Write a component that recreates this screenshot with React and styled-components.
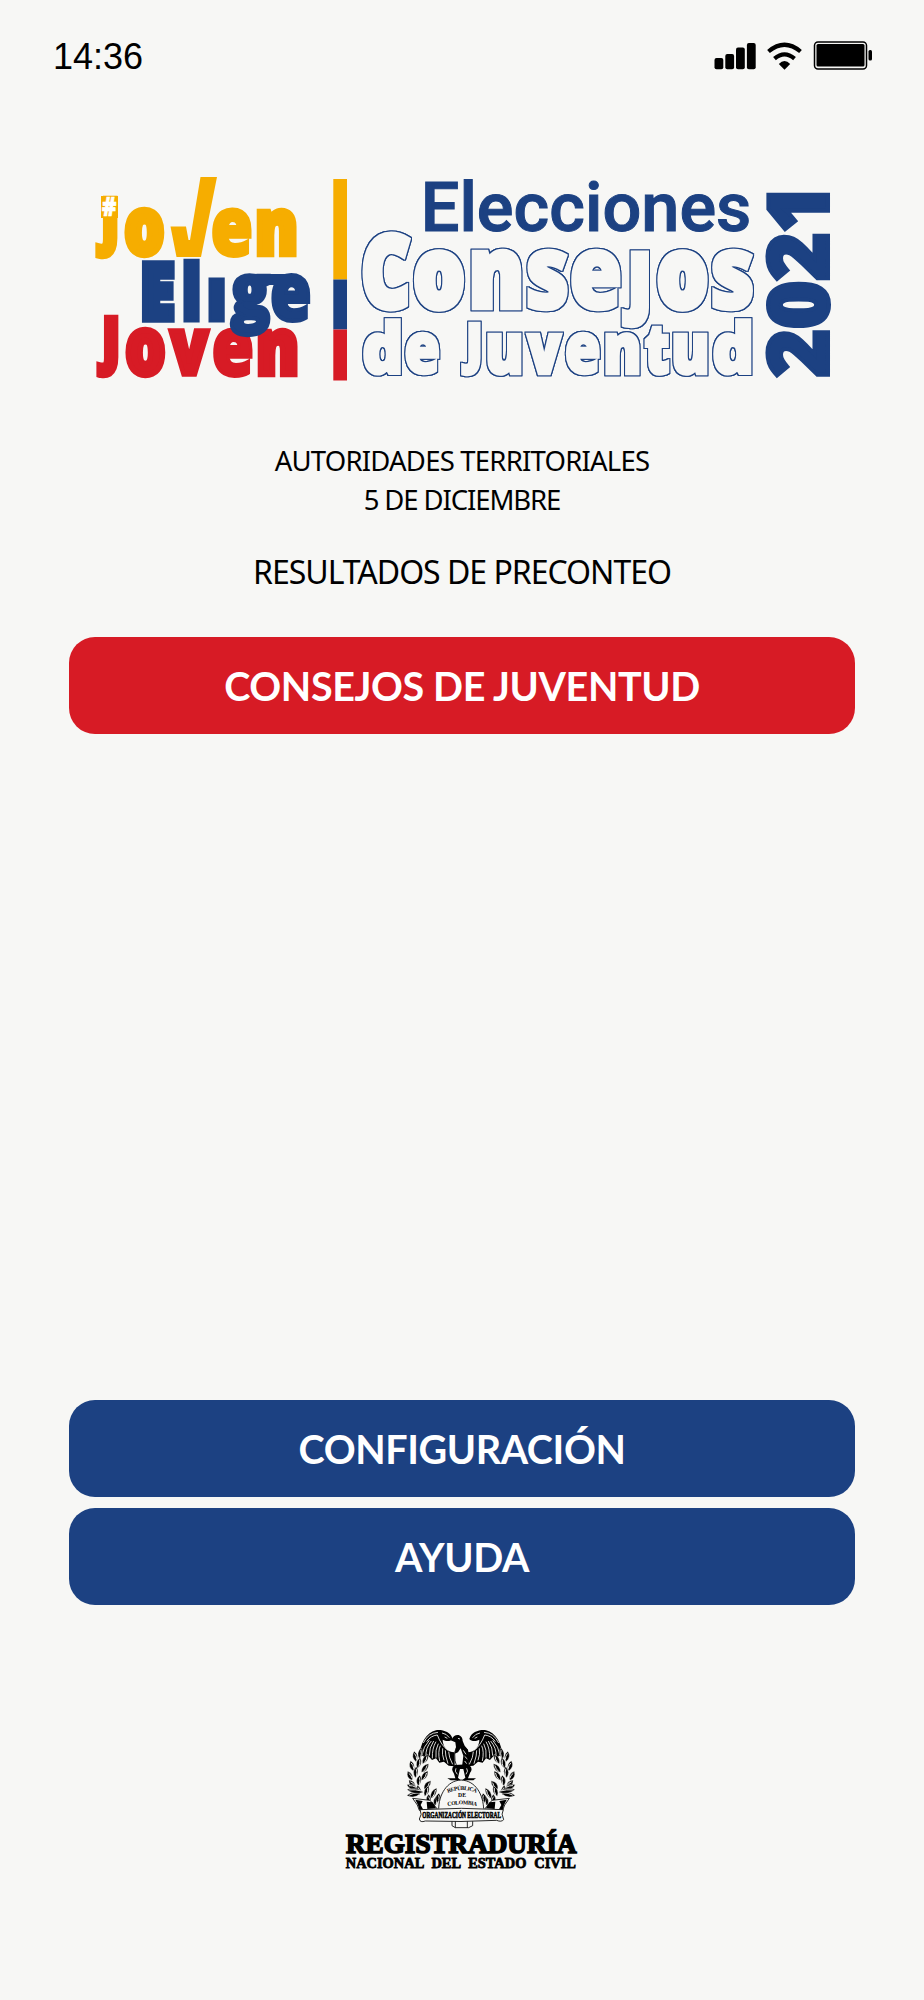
import React from 'react';
import styled, { createGlobalStyle } from 'styled-components';

const yellow = '#f6ad00';
const blue = '#1c4182';
const red = '#d71b25';
const paper = '#f7f7f5';

const canvas = document.createElement('canvas').getContext('2d');

// stretches a piece of text so that its ink fills the given box
function FitText({ children, box, color, font = 'Open Sans', weight = 800, bold = 0, gap = 0, turn }) {
  canvas.font = `${weight} 100px "${font}"`;
  canvas.wordSpacing = `${gap}px`;
  const m = canvas.measureText(children);
  const [x, y, x2, y2] = box;
  const w = (turn ? y2 - y : x2 - x) - bold;
  const h = (turn ? x2 - x : y2 - y) - bold;
  const sx = w / (m.actualBoundingBoxLeft + m.actualBoundingBoxRight);
  const sy = h / (m.actualBoundingBoxAscent + m.actualBoundingBoxDescent);
  const dx = bold / 2 + m.actualBoundingBoxLeft * sx;
  const dy = bold / 2 + m.actualBoundingBoxAscent * sy;
  const place = turn
    ? `translate(${x} ${y2}) rotate(-90) translate(${dx} ${dy})`
    : `translate(${x + dx} ${y + dy})`;
  return (
    <Letter
      $font={font}
      $weight={weight}
      $color={color}
      $bold={bold}
      $gap={gap}
      transform={`${place} scale(${sx} ${sy})`}
    >
      {children}
    </Letter>
  );
}

// letter, ink box, extra weight
const joven = [
  ['J', [95, 196, 118, 258], 6],
  ['o', [124, 208, 165, 258], 6],
  ['e', [212, 208, 252, 258], 3.6],
  ['n', [256, 208, 297, 257], 6],
];

const elige = [
  ['E', [141, 261, 175.5, 322.5], 7],
  ['l', [183, 259, 200, 322.5], 3],
  ['ı', [208, 276, 225, 322], 3],
  ['g', [229, 274, 271, 337], 4],
  ['e', [271, 274, 310.5, 323], 3.6],
];

const jovenRed = [
  ['J', [96, 315, 119, 377.5], 6],
  ['o', [125, 328, 166, 378], 6],
  ['v', [168, 329, 211, 376.5], 5],
  ['e', [213, 328, 253, 378], 3.6],
  ['n', [257, 328, 298, 376.5], 6],
];

const consejos = [
  ['C', [362, 232, 411, 311], 6],
  ['o', [413.5, 249, 465, 311], 7],
  ['n', [471, 249, 522, 310], 6],
  ['s', [527, 249, 568, 311], 4],
  ['e', [571, 249, 621, 311], 4],
  ['ȷ', [621, 252, 649.5, 328.5], 4],
  ['o', [657, 249, 708.5, 311], 7],
  ['s', [712, 249, 753.5, 311], 4],
];

const juventud = [
  ['d', [363, 319, 401, 375.5], 4],
  ['e', [405, 332, 439.5, 375.5], 3],
  ['J', [461, 321, 481, 375.5], 4],
  ['u', [487, 333, 522, 375.5], 4],
  ['v', [526, 333, 563, 374.5], 4],
  ['e', [565.5, 332, 600, 375.5], 3],
  ['n', [605, 332, 640, 374.5], 4],
  ['t', [644, 326, 669.5, 375.5], 4],
  ['u', [673, 333, 708, 375.5], 4],
  ['d', [713, 319, 751.5, 375.5], 4],
];

function Word({ letters, color, filter }) {
  return (
    <g filter={filter}>
      {letters.map(([ch, box, bold], i) => (
        <FitText key={i} box={box} color={color} bold={bold}>{ch}</FitText>
      ))}
    </g>
  );
}

function ElectionLogo() {
  return (
    <LogoSvg viewBox="90 170 750 215">
      <defs>
        <filter id="outline" filterUnits="userSpaceOnUse" x="350" y="220" width="420" height="165" colorInterpolationFilters="sRGB">
          <feMorphology in="SourceAlpha" operator="dilate" radius="1" result="grown" />
          <feFlood floodColor={blue} />
          <feComposite in2="grown" operator="in" result="edge" />
          <feMerge>
            <feMergeNode in="edge" />
            <feMergeNode in="edge" />
            <feMergeNode in="SourceGraphic" />
          </feMerge>
        </filter>
      </defs>
      <Word letters={joven} color={yellow} />
      <path fill={yellow} d="M170.5 226.5H186L188.5 240H190L200.5 177H217L201 257H176.5Z" />
      <path fill={yellow} d="M101 196H118V218H101Z" />
      <FitText box={[102, 197, 116.5, 216.5]} color="#fff" bold={0.6}>#</FitText>
      <Word letters={jovenRed} color={red} />
      <Word letters={elige} color={blue} />
      <path fill={blue} d="M250 274H292V285H250Z" />
      <path fill={yellow} d="M333.3 179H347V279.5H333.3Z" />
      <path fill={blue} d="M333.3 279.5H347V329.5H333.3Z" />
      <path fill={red} d="M333.3 329.5H347V380.5H333.3Z" />
      <FitText box={[425, 178.5, 749.5, 232.5]} color={blue} font="Roboto" weight={500} bold={1}>Elecciones</FitText>
      <Word letters={consejos} color={paper} filter="url(#outline)" />
      <Word letters={juventud} color={paper} filter="url(#outline)" />
      <FitText box={[766, 192.5, 831, 377.5]} color={blue} bold={4} turn>2021</FitText>
    </LogoSvg>
  );
}

// x, y, angle, length of every leaf on one branch
const leaves = [
  [268, 132, -80, 34], [258, 140, -100, 32], [278, 146, -60, 32],
  [262, 160, -75, 34], [250, 168, -105, 32], [274, 172, -50, 34],
  [256, 188, -85, 34], [246, 196, -115, 30], [274, 196, -55, 34],
  [264, 212, -80, 32], [282, 222, -50, 32], [256, 218, -130, 30],
  [284, 244, -70, 34], [302, 250, -60, 36], [268, 240, -100, 30],
  [296, 268, -90, 30], [314, 272, -75, 32], [322, 262, -80, 28],
  [262, 222, -158, 34], [270, 236, 172, 40], [280, 232, -170, 50],
];

function EmblemSide() {
  return (
    <>
      <path d="M368 72C362 50 335 43 318 46C288 52 270 88 268 124L280 122L284 131L296 124L306 135L318 130L328 143L342 140L356 152L374 154V112C350 112 338 92 338 74C348 80 362 80 368 72Z" />
      <Cut d="M298 76Q280 95 276 120M304 78Q286 100 288 124M311 78Q297 98 298 122M318 80Q306 100 307 130M325 86Q315 104 318 128M331 92Q323 110 329 138M338 100Q335 118 342 136M346 106Q345 120 354 146M356 110Q356 126 368 148" />
      <Cut d="M280 84Q294 54 324 52M290 80Q302 62 322 60Q334 92 354 106M336 54Q350 56 358 68M344 66L352 70" />
      {leaves.map(([x, y, a, l], i) => (
        <g key={i} transform={`translate(${x} ${y}) rotate(${a})`}>
          <Leaf d={`M0 0Q${l * 0.5} -14 ${l} 0Q${l * 0.5} 14 0 0Z`} />
          <Cut d={`M6 3Q${l * 0.5} 5 ${l - 7} 0`} />
        </g>
      ))}
      <Outlined d="M248 250L300 256L322 282L268 286L262 270Z" />
      <path d="M256 254L278 258L272 270L280 284H268L264 270ZM290 260L308 262L318 280L292 282Z" />
    </>
  );
}

function Emblem() {
  return (
    <g transform="translate(330 1715) scale(0.33333)">
      <EmblemSide />
      <g transform="translate(786 0) scale(-1 1)">
        <EmblemSide />
      </g>
      <Outlined d="M326 284C326 240 350 197 393 195C438 197 460 240 461 284Z" />
      <Outlined d="M374 112Q372 138 382 160H412Q420 132 412 104L396 92L380 96Z" />
      <path d="M366 72Q372 58 386 60Q398 64 398 78L404 92L414 104L418 130L412 158L402 150L396 156L400 122L392 100L384 112L374 116L378 96L376 82L362 76Z" />
      <Cut d="M384 70L390 72M400 106L408 118M404 124L412 132M404 138L410 146" />
      <path d="M374 150Q360 160 372 176L376 190H352L362 196H392L384 188L390 162L400 162L406 188L396 196H430L438 190H414L420 174Q432 160 414 148Z" />
      <Cut d="M378 160Q372 168 382 178M410 160Q416 168 408 178" />
      <Outlined d="M366 314V332L376 338H416L428 332V314ZM376 316V338M412 316V338" />
      <Outlined d="M270 284Q393 276 520 284Q512 296 521 314Q514 322 500 316Q393 322 286 318Q270 324 268 312Q278 298 270 284Z" />
      <path id="arcTop" fill="none" d="M346 236Q395 214 446 236" />
      <path id="arcLow" fill="none" d="M350 274Q395 262 444 274" />
      <SmallSerif textAnchor="middle"><textPath href="#arcTop" startOffset="50%" textLength="88">REPÚBLICA</textPath></SmallSerif>
      <SmallSerif x="396" y="246" textAnchor="middle">DE</SmallSerif>
      <SmallSerif textAnchor="middle"><textPath href="#arcLow" startOffset="50%" textLength="88">COLOMBIA</textPath></SmallSerif>
      <FitText box={[277, 287, 513, 311]} color="#000" font="Liberation Serif" weight={700} bold={0.5}>ORGANIZACIÓN ELECTORAL</FitText>
    </g>
  );
}

function RegistryLogo() {
  return (
    <RegistrySvg viewBox="340 1725 244 150">
      <Emblem />
      <FitText box={[345.5, 1829, 577.5, 1854]} color="#000" font="Liberation Serif" weight={700} bold={1.6}>REGISTRADURÍA</FitText>
      <FitText box={[345.5, 1857.5, 577.5, 1868.7]} color="#000" font="Liberation Serif" weight={700} bold={0.8} gap={30}>NACIONAL DEL ESTADO CIVIL</FitText>
    </RegistrySvg>
  );
}

function StatusIcons() {
  return (
    <StatusSvg viewBox="710 38 166 36">
      <rect x="714.5" y="58" width="8.8" height="11.3" rx="2" />
      <rect x="725.3" y="54" width="8.8" height="15.3" rx="2" />
      <rect x="736" y="47.5" width="8.8" height="21.8" rx="2" />
      <rect x="746.9" y="43" width="8.8" height="26.3" rx="2" />
      <path d="M768.5 51.5Q784.5 38 800.5 51.5M774.5 58.7Q784.5 50 794.5 58.7" fill="none" stroke="#000" strokeWidth="4.2" />
      <path d="M778.8 64Q784.5 58 790.2 64L784.5 69.8Z" />
      <rect x="814.5" y="42" width="52" height="27" rx="3.5" fill="none" stroke="#000" strokeWidth="1.5" />
      <rect x="816.5" y="44" width="48" height="22.5" rx="1.5" />
      <rect x="868.5" y="50" width="3.5" height="10.5" rx="1.5" />
    </StatusSvg>
  );
}

function App() {
  return (
    <>
      <GlobalStyle />
      <Screen>
        <StatusBar>
          <Clock>14:36</Clock>
          <StatusIcons />
        </StatusBar>
        <ElectionLogo />
        <Heading>
          <Line>AUTORIDADES TERRITORIALES</Line>
          <Line $tight>5 DE DICIEMBRE</Line>
        </Heading>
        <Subtitle>RESULTADOS DE PRECONTEO</Subtitle>
        <MenuButton $color={red}>CONSEJOS DE JUVENTUD</MenuButton>
        <BottomMenu>
          <MenuButton $color={blue}>CONFIGURACIÓN</MenuButton>
          <MenuButton $color={blue}>AYUDA</MenuButton>
        </BottomMenu>
        <RegistryLogo />
      </Screen>
    </>
  );
}

export default App;

const GlobalStyle = createGlobalStyle`
  body {
    margin: 0;
    background: ${paper};
  }
`;

const Screen = styled.main`
  box-sizing: border-box;
  width: 924px;
  height: 2000px;
  display: flex;
  flex-direction: column;
  align-items: center;
  background: ${paper};
  color: #000;
  font-family: 'Noto Sans', sans-serif;
`;

const StatusBar = styled.header`
  box-sizing: border-box;
  width: 100%;
  height: 74px;
  padding: 38px 48px 0 53px;
  display: flex;
  justify-content: space-between;
`;

const Clock = styled.span`
  font-family: 'Liberation Sans', sans-serif;
  font-size: 36px;
  line-height: 38px;
`;

const StatusSvg = styled.svg`
  width: 166px;
  height: 36px;
`;

const LogoSvg = styled.svg`
  width: 750px;
  height: 215px;
  margin-top: 96px;
  margin-left: 6px;
`;

const Letter = styled.text`
  font-family: '${p => p.$font}', sans-serif;
  font-size: 100px;
  font-weight: ${p => p.$weight};
  word-spacing: ${p => p.$gap}px;
  fill: ${p => p.$color};
  stroke: ${p => p.$color};
  stroke-width: ${p => p.$bold}px;
  vector-effect: non-scaling-stroke;
`;

const SmallSerif = styled.text`
  font-family: 'Liberation Serif', serif;
  font-size: 17px;
  font-weight: 700;
`;

const Cut = styled.path`
  fill: none;
  stroke: ${paper};
  stroke-width: 2.6px;
`;

const Leaf = styled.path`
  stroke: ${paper};
  stroke-width: 1px;
`;

const Outlined = styled.path`
  fill: ${paper};
  stroke: #000;
  stroke-width: 2.5px;
`;

const Heading = styled.div`
  margin-top: 56px;
  text-align: center;
`;

const Line = styled.p`
  margin: 0;
  font-size: 27.5px;
  line-height: 39px;
  letter-spacing: ${p => (p.$tight ? -1.1 : -0.78)}px;
`;

const Subtitle = styled.h1`
  margin: 31px 0 0;
  font-size: 32px;
  font-weight: 400;
  line-height: 44px;
  letter-spacing: -1px;
`;

const MenuButton = styled.button`
  width: 786px;
  height: 97px;
  margin-top: 43px;
  border: none;
  border-radius: 26px;
  background: ${p => p.$color};
  color: #fff;
  font-family: Lato, sans-serif;
  font-size: 39.5px;
  font-weight: 700;
  letter-spacing: -0.4px;
`;

const BottomMenu = styled.div`
  margin-top: 666px;
  display: flex;
  flex-direction: column;
  gap: 11px;

  ${MenuButton} {
    margin: 0;
  }
`;

const RegistrySvg = styled.svg`
  width: 244px;
  height: 150px;
  margin-top: 120px;
`;
